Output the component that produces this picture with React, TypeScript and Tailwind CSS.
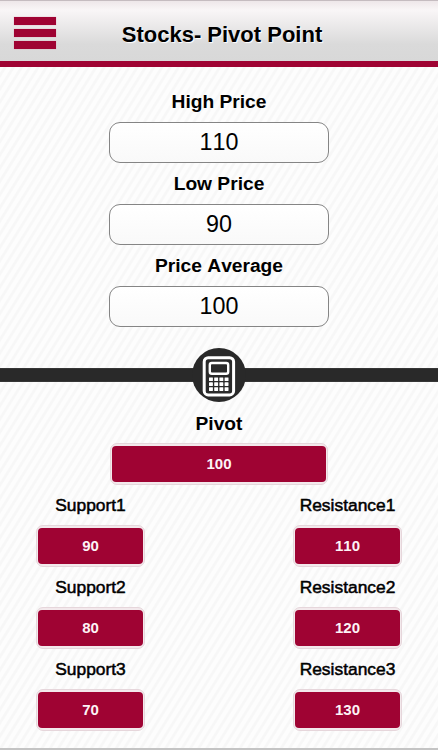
import React from "react";

const inputs = [
  { label: "High Price", value: "110" },
  { label: "Low Price", value: "90" },
  { label: "Price Average", value: "100" },
];

const levels = [
  ["Support1", "90", "Resistance1", "110"],
  ["Support2", "80", "Resistance2", "120"],
  ["Support3", "70", "Resistance3", "130"],
];

function Result({ value }: { value: string }) {
  return (
    <div className="h-[42px] w-full rounded-[7px] border border-[#e6d6db] bg-[#f3e9ec] px-[1px] py-[2px]">
      <div className="flex h-[36px] items-center justify-center rounded-[4px] bg-[#9f0333] text-[15px] font-bold text-[#fdf3f6]">
        {value}
      </div>
    </div>
  );
}

function Level({ label, value }: { label: string; value: string }) {
  return (
    <div className="flex w-[109px] flex-col items-center">
      <div className="h-[33px] whitespace-nowrap text-[17.4px] leading-[26px] [-webkit-text-stroke:0.5px_black]">
        {label}
      </div>
      <Result value={value} />
    </div>
  );
}

function Calculator() {
  return (
    <svg width="54" height="54" viewBox="0 0 54 54" className="block">
      <circle cx="27" cy="27" r="27" fill="#292929" />
      <rect x="12.2" y="9.7" width="29.4" height="37.2" rx="4" fill="none" stroke="#fff" strokeWidth="3" />
      <rect x="17.8" y="15" width="18.4" height="10.8" rx="2" fill="none" stroke="#fff" strokeWidth="2.4" />
      {[29.4, 34.3, 39.2].map((y) =>
        [17, 22.2, 27.4, 32.6].map((x) => (
          <rect key={`${x}-${y}`} x={x} y={y} width="3.9" height="3.7" rx="0.4" fill="#fff" />
        )),
      )}
    </svg>
  );
}

export default function App() {
  return (
    <div className="flex h-[750px] w-[438px] flex-col overflow-hidden border-b-2 border-[#c4c4c4] bg-[#fdfdfd] bg-[repeating-linear-gradient(122deg,#fdfdfd_0px,#fdfdfd_3px,#f7f7f7_4.2px,#f7f7f7_5.8px,#fdfdfd_7px)] font-['Liberation_Sans',Arial,sans-serif] text-black [font-kerning:none]">
      <header className="grid h-[67px] shrink-0 grid-cols-[70px_1fr_64px] items-center border-b-[6px] border-t border-b-[#9f0333] border-t-[#c5bcc0] bg-[linear-gradient(#eee7e9,#f9f6f7_15%,#dadada_72%,#d8d8d8)]">
        <div className="ml-[14px] mt-[4px] flex w-[42px] flex-col gap-[4px]">
          <div className="h-[8px] bg-[#9f0333] shadow-[0_0_1px_#dc9bb0]" />
          <div className="h-[8px] bg-[#9f0333] shadow-[0_0_1px_#dc9bb0]" />
          <div className="h-[8px] bg-[#9f0333] shadow-[0_0_1px_#dc9bb0]" />
        </div>
        <h1 className="mt-[8px] whitespace-nowrap text-center text-[22px] font-bold leading-[28px] [text-shadow:1px_1px_1px_white]">
          Stocks- Pivot Point
        </h1>
      </header>

      <section className="flex h-[281px] shrink-0 flex-col items-center pt-[14px]">
        {inputs.map(({ label, value }) => (
          <div key={label} className="flex h-[82px] flex-col items-center">
            <div className="h-[41px] text-[19.2px] font-bold leading-[41px]">{label}</div>
            <div className="flex h-[41px] w-[220px] shrink-0 items-center justify-center rounded-[11px] border border-[#858585] bg-linear-to-b from-white to-[#f9f9f9] text-[23.3px] leading-[39px]">
              {value}
            </div>
          </div>
        ))}
      </section>

      <div className="flex h-[54px] shrink-0 items-center justify-center bg-[linear-gradient(transparent_20px,#444_20px,#292929_21px,#292929_33px,#444_34px,transparent_34px)]">
        <Calculator />
      </div>

      <section className="flex flex-col">
        <div className="mx-auto flex w-[218px] flex-col items-center">
          <div className="h-[41px] text-[19.2px] font-bold leading-[43px]">Pivot</div>
          <Result value="100" />
        </div>
        {levels.map(([s, sv, r, rv]) => (
          <div key={s} className="flex h-[82px] justify-between px-[36px] pt-[7px]">
            <Level label={s} value={sv} />
            <Level label={r} value={rv} />
          </div>
        ))}
      </section>
    </div>
  );
}
